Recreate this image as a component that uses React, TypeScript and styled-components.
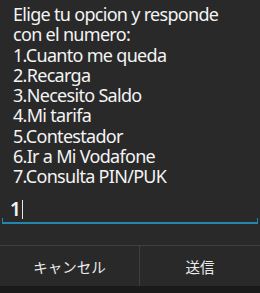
import React from 'react';
import styled, { createGlobalStyle } from 'styled-components';

const GlobalStyle = createGlobalStyle`
  html, body {
    margin: 0;
    padding: 0;
    background: #292929;
  }
`;

const lines = [
  'Elige tu opcion y responde',
  'con el numero:',
  '1.Cuanto me queda',
  '2.Recarga',
  '3.Necesito Saldo',
  '4.Mi tarifa',
  '5.Contestador',
  '6.Ir a Mi Vodafone',
  '7.Consulta PIN/PUK',
];

const Dialog = styled.div`
  width: 260px;
  height: 293px;
  background: #292929;
  display: flex;
  flex-direction: column;
  font-family: 'Noto Sans', 'Noto Sans CJK JP', sans-serif;
  color: #f4f4f4;
  overflow: hidden;
`;

const Message = styled.div`
  padding: 4px 0 0 13px;
  font-size: 18px;
  line-height: 20.3px;
  letter-spacing: -0.7px;
  white-space: pre;
`;

const InputArea = styled.div`
  margin: 10px 2px 0 2px;
  height: 27px;
  position: relative;
  display: flex;
  align-items: flex-end;
  padding: 0 0 3px 8px;
  box-sizing: border-box;
  border-bottom: 2px solid #2386aa;
`;

const Tick = styled.span<{ side: 'left' | 'right' }>`
  position: absolute;
  bottom: 0;
  ${({ side }) => side}: 0;
  width: 1px;
  height: 4px;
  background: #2386aa;
`;

const InputText = styled.span`
  font-size: 19px;
  line-height: 20px;
  font-weight: 600;
`;

const Caret = styled.span`
  display: inline-block;
  width: 1px;
  height: 19px;
  margin-left: 1px;
  background: #e8e8e8;
`;

const ButtonBar = styled.div`
  margin-top: 21px;
  height: 40px;
  display: flex;
  border-top: 1px solid #3f3f3f;
`;

const Button = styled.div<{ grow: number }>`
  flex: ${({ grow }) => grow};
  display: flex;
  align-items: center;
  justify-content: center;
  padding-top: 2px;
  font-size: 14.5px;
  color: #ececec;
  & + & {
    border-left: 1px solid #3f3f3f;
  }
`;

const BottomStrip = styled.div`
  flex: 1;
  background: #1a1a1a;
`;

export default function App() {
  return (
    <>
      <GlobalStyle />
      <Dialog>
        <Message>{lines.join('\n')}</Message>
        <InputArea>
          <Tick side="left" />
          <InputText>1</InputText>
          <Caret />
          <Tick side="right" />
        </InputArea>
        <ButtonBar>
          <Button grow={139}>キャンセル</Button>
          <Button grow={120}>送信</Button>
        </ButtonBar>
        <BottomStrip />
      </Dialog>
    </>
  );
}
